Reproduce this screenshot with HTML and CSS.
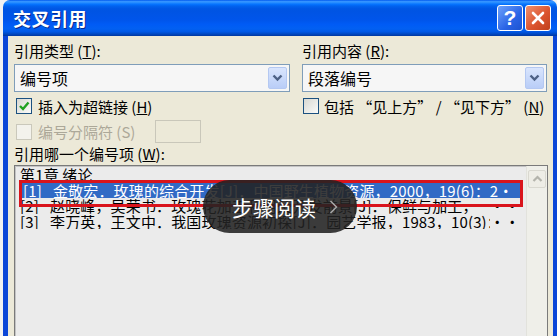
FILE: index.html
```html
<!DOCTYPE html>
<html lang="zh-CN">
<head>
  <meta charset="UTF-8" />
  <title>交叉引用</title>
  <link rel="stylesheet" href="styles.css">
</head>
<body>
<div class="ventana">
  <div class="titulo">
    <span class="titulo-texto">交叉引用</span>
    <div class="titulo-botones">
      <span class="btn-ayuda">?</span>
      <span class="btn-cerrar">
        <svg width="16" height="16" viewBox="0 0 16 16"><path d="M3 3 L13 13 M13 3 L3 13" stroke="#fff" stroke-width="2.6" stroke-linecap="round"/></svg>
      </span>
    </div>
  </div>

  <div class="cuerpo">
    <div class="columnas">
      <div class="etiqueta">引用类型 (<u>T</u>):</div>
      <div class="etiqueta">引用内容 (<u>R</u>):</div>

      <div class="combo">
        <span>编号项</span>
        <span class="flecha"><svg width="11" height="8" viewBox="0 0 11 8"><path d="M1.5 1.5 L5.5 5.5 L9.5 1.5" fill="none" stroke="#4d6185" stroke-width="2.4"/></svg></span>
      </div>
      <div class="combo">
        <span>段落编号</span>
        <span class="flecha"><svg width="11" height="8" viewBox="0 0 11 8"><path d="M1.5 1.5 L5.5 5.5 L9.5 1.5" fill="none" stroke="#4d6185" stroke-width="2.4"/></svg></span>
      </div>

      <div class="fila-check">
        <span class="caja"><svg width="12" height="12" viewBox="0 0 12 12"><path d="M2 6 L5 9 L10.5 2.5" fill="none" stroke="#21a121" stroke-width="2.4"/></svg></span>
        <span>插入为超链接 (<u>H</u>)</span>
      </div>
      <div class="fila-check derecha">
        <span class="caja"></span>
        <span>包括 “见上方” / “见下方” (<u>N</u>)</span>
      </div>

      <div class="fila-check desactivada">
        <span class="caja"></span>
        <span class="texto-sep">编号分隔符 (S)</span>
        <span class="entrada"></span>
      </div>
    </div>

    <div class="etiqueta">引用哪一个编号项 (<u>W</u>):</div>

    <div class="lista">
      <div class="items">
        <div class="item">第1章 绪论</div>
        <div class="item sel"><span class="txt"><span class="num">[1]</span>金敬宏．玫瑰的综合开发[J]．中国野生植物资源，2000，19(6)：2·</span></div>
        <div class="item"><span class="txt"><span class="num">[2]</span>赵晓峰，吴荣书．玫瑰花加工利用及开发前景[J]．保鲜与加工，</span><span class="puntos">··</span></div>
        <div class="item"><span class="txt"><span class="num">[3]</span>李万英，王文中．我国玫瑰资源初探[J]．园艺学报，1983，10(3)：</span><span class="puntos">··</span></div>
      </div>
      <div class="scroll">
        <span class="scroll-arriba"><svg width="11" height="8" viewBox="0 0 11 8"><path d="M1.5 6 L5.5 2 L9.5 6" fill="none" stroke="#b4b4ac" stroke-width="2.2"/></svg></span>
      </div>

      <!-- marco rojo y aviso encima de la lista -->
      <div class="marca"></div>
      <div class="aviso">
        <span>步骤阅读</span>
        <svg width="9" height="14" viewBox="0 0 9 14"><path d="M1.5 1 L7.5 7 L1.5 13" fill="none" stroke="#a8a8a8" stroke-width="1.5"/></svg>
      </div>
    </div>
  </div>
</div>
</body>
</html>
```

FILE: styles.css
```css
* {
  box-sizing: border-box;
}

body {
  margin: 0;
  background: #f2f2f2;
  font-family: "Noto Sans CJK SC", "Liberation Sans", sans-serif;
  font-size: 15px;
  color: #000;
  overflow: hidden;
}

u {
  text-decoration: underline;
}

.ventana {
  width: 554px;
  height: 336px;
  margin-left: 3px;
  display: flex;
  flex-direction: column;
}

.titulo {
  height: 36px;
  flex: none;
  display: flex;
  align-items: center;
  justify-content: space-between;
  padding: 0 6px 0 10px;
  border-radius: 7px 7px 0 0;
  background: linear-gradient(#0058ee 0%, #3593ff 4%, #288eff 7%, #127dff 10%, #036ffc 13%, #0262ee 17%, #0057e5 24%, #0054e3 30%, #0055eb 56%, #005bf5 68%, #0260f2 80%, #0058e6 88%, #0049c4 94%, #0037a0 100%);
}

.titulo-texto {
  color: #fff;
  font-size: 18px;
  font-weight: 700;
  text-shadow: 1px 1px 0 #0a2a8a;
  letter-spacing: 0.5px;
}

.titulo-botones {
  display: flex;
  gap: 2px;
}

.btn-ayuda,
.btn-cerrar {
  width: 26px;
  height: 26px;
  border: 1px solid #fff;
  border-radius: 3px;
  display: flex;
  align-items: center;
  justify-content: center;
}

.btn-ayuda {
  background: linear-gradient(135deg, #6ea2fb, #2a64e6 60%, #1d53d0);
  color: #fff;
  font-family: "Liberation Sans", sans-serif;
  font-size: 21px;
  font-weight: 700;
}

.btn-cerrar {
  background: linear-gradient(135deg, #f0906e, #dc5530 55%, #c0401c);
}

.cuerpo {
  flex: 1;
  overflow: hidden;
  background: #ece9d8;
  border-left: 5px solid #0b46d8;
  border-right: 4px solid #0b46d8;
  padding: 5px 6px 0 6px;
}

.columnas {
  display: grid;
  grid-template-columns: 276px 245px;
  column-gap: 12px;
}

.etiqueta {
  height: 20px;
  line-height: 20px;
  white-space: nowrap;
}

.combo {
  margin-top: 3px;
  height: 28px;
  border: 1px solid #7f9db9;
  background: #f6f6f6;
  display: flex;
  align-items: center;
  justify-content: space-between;
  padding: 2px 2px 2px 5px;
  font-size: 16px;
}

.flecha {
  width: 19px;
  height: 100%;
  border: 1px solid #b4c8f2;
  border-radius: 2px;
  background: linear-gradient(#d9e5fd, #b9cdf7);
  display: flex;
  align-items: center;
  justify-content: center;
}

.fila-check {
  margin-top: 3px;
  height: 22px;
  display: flex;
  align-items: center;
  gap: 6px;
  padding-left: 2px;
  white-space: nowrap;
}

.fila-check.derecha {
  padding-left: 1px;
  gap: 5px;
}

.caja {
  width: 16px;
  height: 16px;
  flex: none;
  border: 1px solid #1c5180;
  background: linear-gradient(135deg, #d8d8d2, #fbfbf9);
  display: flex;
  align-items: center;
  justify-content: center;
}

.desactivada {
  margin-top: 2px;
  height: 25px;
  color: #aca899;
}

.desactivada .caja {
  border-color: #cac8bb;
  background: #f3f2ec;
}

.texto-sep {
  width: 111px;
}

.entrada {
  width: 46px;
  height: 23px;
  border: 1px solid #c9c7ba;
  background: #ece9d8;
}

.lista {
  position: relative;
  margin-top: 1px;
  width: 534px;
  height: 190px;
  display: flex;
  border: 1px solid #7a7a7a;
  box-shadow: inset 1px 1px 0 #c4c4c4;
  background: #ebebeb;
}

.items {
  flex: 1;
  min-width: 0;
  overflow: hidden;
  padding: 1px 6px 0 5px;
}

.item {
  display: flex;
  line-height: 15.5px;
  height: 15.5px;
  white-space: nowrap;
  overflow: hidden;
  letter-spacing: 0.15px;
}

.txt {
  overflow: hidden;
  min-width: 0;
}

.num {
  display: inline-block;
  width: 30px;
}

.puntos {
  flex: none;
  margin-left: auto;
}

.item.sel {
  margin-left: 2px;
  padding-left: 1px;
  background: #316ac5;
  color: #fff;
}

.scroll {
  width: 21px;
  flex: none;
  padding: 4px 1px 0 1px;
  background: #efefe9;
  border-left: 1px solid #e2e2dc;
}

.scroll-arriba {
  height: 18px;
  border: 1px solid #d9d8d0;
  border-radius: 2px;
  background: #eeede6;
  display: flex;
  align-items: center;
  justify-content: center;
}

.marca {
  position: absolute;
  left: 4px;
  top: 14px;
  width: 504px;
  height: 27px;
  border: 3px solid #d9141c;
}

.aviso {
  position: absolute;
  left: 188px;
  top: 14px;
  width: 154px;
  height: 53px;
  border-radius: 27px;
  background: rgba(34, 34, 34, 0.88);
  display: flex;
  align-items: center;
  padding-left: 29px;
  gap: 13px;
  color: #fff;
  font-size: 21px;
}
```
